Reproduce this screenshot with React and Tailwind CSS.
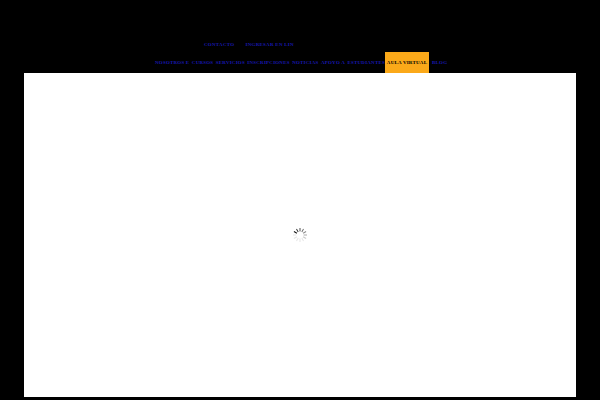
export default function App() {
  const spinner = Array.from({ length: 12 }, (_, i) => i);
  const navy = "text-[#1818b0]";
  return (
    <div className="h-[400px] w-[600px] overflow-hidden bg-black font-['Liberation_Serif',serif] flex flex-col">
      <div className={`h-[52px] flex items-start pl-[204px] pt-[41px] gap-[11px] text-[5px] leading-[7px] tracking-[0.25px] font-bold ${navy}`}>
        <span>CONTACTO</span>
        <span>INGRESAR EN LIN</span>
      </div>
      <div className={`h-[21px] flex pl-[155px] text-[5px] tracking-[0.2px] font-bold ${navy}`}>
        <div className="w-[230px] flex items-center justify-between whitespace-nowrap">
          <span>NOSOTROS E</span>
          <span>CURSOS</span>
          <span>SERVICIOS</span>
          <span>INSCRIPCIONES</span>
          <span>NOTICIAS</span>
          <span>APOYO A</span>
          <span>ESTUDIANTES</span>
        </div>
        <div className="w-[44px] bg-[#fba919] flex items-center justify-center text-black whitespace-nowrap">AULA VIRTUAL</div>
        <div className="pl-[3px] flex items-center">BLOG</div>
      </div>
      <div className="mx-[24px] h-[324px] bg-white flex items-center justify-center">
        <svg width="16" height="16" viewBox="0 0 16 16" className="mt-[-1px]">
          {spinner.map((i) => (
            <line
              key={i}
              x1="8"
              y1="1"
              x2="8"
              y2="4.4"
              stroke="#111"
              strokeWidth="1"
              opacity={Math.max(0.1, 1 - ((i + 2) % 12) * 0.13)}
              transform={`rotate(${i * 30} 8 8)`}
            />
          ))}
        </svg>
      </div>
    </div>
  );
}
